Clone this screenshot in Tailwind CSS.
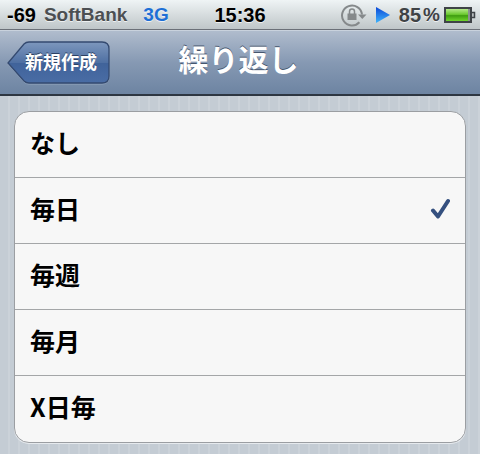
<!DOCTYPE html>
<html lang="ja">
<head>
    <meta charset="UTF-8">
    <meta name="viewport" content="width=device-width, initial-scale=1.0">
    <title>繰り返し</title>
    <script src="https://cdn.jsdelivr.net/npm/@tailwindcss/browser@4"></script>
</head>
<body class="min-h-screen bg-[#c4ccd4] bg-[repeating-linear-gradient(90deg,#c4ccd4_0px,#c4ccd4_8px,#cbd2d9_8px,#cbd2d9_10px)] font-['Liberation_Sans','Noto_Sans_CJK_JP',sans-serif]">
    <!-- Status bar -->
    <div class="grid h-[30px] grid-cols-[1fr_auto_1fr] items-center border-b border-[#6b7078] bg-linear-to-b from-[#eff4f5] to-[#bfc6c9] px-1 text-xl leading-[28px]">
        <div class="flex items-center pl-[3px] whitespace-nowrap [text-shadow:0_1px_0_#ffffffb3]">
            <span class="font-bold text-black">-69</span>
            <span class="ml-2 text-[19px] font-bold text-[#4c4f52]">SoftBank</span>
            <span class="ml-4 text-[19px] font-bold text-[#1d6fd6]">3G</span>
        </div>
        <div class="font-bold text-black [text-shadow:0_1px_0_#ffffffb3]">15:36</div>
        <div class="flex items-center justify-end">
            <svg class="h-6 w-[26px]" viewBox="0 0 26 24" fill="none" aria-hidden="true">
                <path d="M18.4 19.3A10 10 0 1 1 21 11.500" stroke="#85898b" stroke-width="2"/>
                <path d="M17 11.500h8.500L21.300 16z" fill="#85898b"/>
                <path d="M8.500 11V8.500a2.500 2.500 0 0 1 5 0V11" stroke="#85898b" stroke-width="1.500"/>
                <rect x="6.500" y="10.500" width="9" height="6.500" fill="#85898b"/>
            </svg>
            <svg class="ml-2 h-4 w-4" viewBox="0 0 16 16" aria-hidden="true">
                <defs>
                    <linearGradient id="play" x1="0" y1="0" x2="0" y2="1">
                        <stop offset="0" stop-color="#0b48d8"/>
                        <stop offset="1" stop-color="#3fb4fb"/>
                    </linearGradient>
                </defs>
                <path d="M1 0v16l14-8z" fill="url(#play)"/>
            </svg>
            <span class="ml-2 text-xl font-bold text-[#3f4245] [text-shadow:0_1px_0_#ffffffb3]">85</span>
            <span class="ml-[2px] text-[19px] font-bold text-[#3f4245] [text-shadow:0_1px_0_#ffffffb3]">%</span>
            <svg class="ml-1 h-4 w-8" viewBox="0 0 32 16" aria-hidden="true">
                <defs>
                    <linearGradient id="charge" x1="0" y1="0" x2="0" y2="1">
                        <stop offset="0" stop-color="#b5ea8a"/>
                        <stop offset="0.450" stop-color="#6cc931"/>
                        <stop offset="0.550" stop-color="#3f9d10"/>
                        <stop offset="1" stop-color="#6fd52c"/>
                    </linearGradient>
                </defs>
                <rect x="1" y="1" width="26" height="14" fill="#8b8f93" stroke="#3f4347" stroke-width="2"/>
                <rect x="2" y="2" width="22" height="12" fill="url(#charge)"/>
                <path d="M28 5.500h2.500v5H28" fill="#b9bdbf" stroke="#3f4347" stroke-width="1.500"/>
            </svg>
        </div>
    </div>

    <!-- Navigation bar -->
    <header class="grid h-[66px] grid-cols-[1fr_auto_1fr] items-center border-t border-b-2 border-t-[#c9d2dd] border-b-[#2d3642] bg-linear-to-b from-[#b0bccd] via-[#8699b3] to-[#6d84a2] pr-[10px] pl-[7px]">
        <button type="button" class="relative h-11 w-[104px] cursor-pointer pl-1 text-lg leading-[42px] font-bold text-white">
            <svg class="absolute inset-0 h-11 w-[104px]" viewBox="0 0 104 44" aria-hidden="true">
                <defs>
                    <linearGradient id="back" x1="0" y1="0" x2="0" y2="1">
                        <stop offset="0" stop-color="#7d97bd"/>
                        <stop offset="0.500" stop-color="#4f70a3"/>
                        <stop offset="0.510" stop-color="#40639a"/>
                        <stop offset="1" stop-color="#4a6da5"/>
                    </linearGradient>
                </defs>
                <path d="M22 2h73q7 0 7 7v27q0 7-7 7H22q-3 0-5-2L1 23 17 4q2-2 5-2z" fill="none" stroke="#a9b8cd" stroke-opacity="0.600"/>
                <path d="M22 1h73q7 0 7 7v27q0 7-7 7H22q-3 0-5-2L1 22 17 3q2-2 5-2z" fill="url(#back)" stroke="#344a70" stroke-width="1.300"/>
            </svg>
            <span class="relative [text-shadow:0_-1px_0_#2c4063]">新規作成</span>
        </button>
        <h1 id="title" class="pb-[3px] text-3xl font-bold text-white [text-shadow:0_-1px_0_#46566e]">繰り返し</h1>
    </header>

    <!-- Repeat options -->
    <main class="px-[14px] pt-[15px] pb-3">
        <div role="radiogroup" aria-labelledby="title" class="divide-y divide-[#a4a6a8] overflow-hidden rounded-[15px] border border-[#9b9ea2] bg-[#f7f7f7] font-['Noto_Sans_CJK_JP',sans-serif] text-[25px] font-bold text-black shadow-[0_1px_0_#e6eaee]">
            <label class="flex h-[66px] cursor-pointer items-center justify-between px-[15px] pb-1">
                なし
                <input type="radio" name="repeat" class="sr-only">
            </label>
            <label class="flex h-[66px] cursor-pointer items-center justify-between px-[15px] pb-1">
                毎日
                <input type="radio" name="repeat" class="sr-only" checked>
                <svg class="h-[22px] w-5" viewBox="0 0 20 22" fill="none" aria-hidden="true">
                    <path d="M3 12.500l5 6L18 3" stroke="#35507f" stroke-width="4" stroke-linecap="round" stroke-linejoin="round"/>
                </svg>
            </label>
            <label class="flex h-[66px] cursor-pointer items-center justify-between px-[15px] pb-1">
                毎週
                <input type="radio" name="repeat" class="sr-only">
            </label>
            <label class="flex h-[66px] cursor-pointer items-center justify-between px-[15px] pb-1">
                毎月
                <input type="radio" name="repeat" class="sr-only">
            </label>
            <label class="flex h-[66px] cursor-pointer items-center justify-between px-[15px] pb-1">
                X日毎
                <input type="radio" name="repeat" class="sr-only">
            </label>
        </div>
    </main>
</body>
</html>
